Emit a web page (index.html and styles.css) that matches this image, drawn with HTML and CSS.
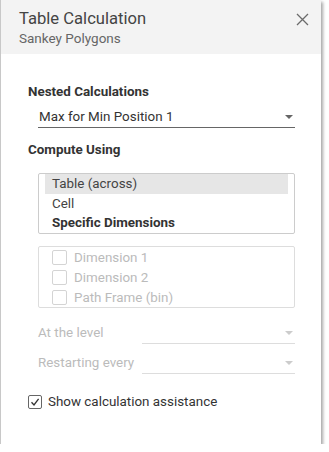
FILE: index.html
```html
<!DOCTYPE html>
<html>

<head>
    <title>Table Calculation</title>
    <link rel="stylesheet" href="styles.css">
</head>

<body>
    <div class="dialog">
        <div class="header">
            <div>
                <div class="title">Table Calculation</div>
                <div class="subtitle">Sankey Polygons</div>
            </div>
            <svg class="close" width="13" height="13" viewBox="0 0 13 13">
                <path d="M1 1 L12 12 M12 1 L1 12" stroke="#6b6b6b" stroke-width="1.3" fill="none" />
            </svg>
        </div>
        <div class="content">
            <div class="label">Nested Calculations</div>
            <div class="select">
                <span>Max for Min Position 1</span>
                <span class="arrow"></span>
            </div>

            <div class="label compute">Compute Using</div>
            <div class="listbox">
                <div class="option selected">Table (across)</div>
                <div class="option">Cell</div>
                <div class="option bold">Specific Dimensions</div>
            </div>

            <div class="dims">
                <div class="dim"><span class="box"></span>Dimension 1</div>
                <div class="dim"><span class="box"></span>Dimension 2</div>
                <div class="dim"><span class="box"></span>Path Frame (bin)</div>
            </div>

            <div class="level-row first">
                <span class="level-label">At the level</span>
                <div class="select disabled"><span></span><span class="arrow"></span></div>
            </div>
            <div class="level-row">
                <span class="level-label">Restarting every</span>
                <div class="select disabled"><span></span><span class="arrow"></span></div>
            </div>

            <div class="assist">
                <span class="check">
                    <svg width="10" height="10" viewBox="0 0 10 10">
                        <path d="M1.5 5.2 L4 8 L8.6 1.8" stroke="#333" stroke-width="1.3" fill="none" />
                    </svg>
                </span>
                Show calculation assistance
            </div>
        </div>
    </div>
</body>

</html>
```

FILE: styles.css
```css
body {
    margin: 0;
    background-color: white;
    font-family: 'Roboto', 'Noto Sans', sans-serif;
    color: #333;
}

.dialog {
    width: 320px;
    height: 444px;
    border-left: 1px solid #c8c8c8;
    background-color: white;
    box-shadow: 2px 2px 3px rgba(0, 0, 0, 0.35);
    display: flex;
    flex-direction: column;
}

.header {
    background-color: #f3f3f3;
    height: 54px;
    padding: 9px 12px 0 18px;
    box-sizing: border-box;
    display: flex;
    justify-content: space-between;
    align-items: flex-start;
}

.title {
    font-size: 16.6px;
    line-height: 20px;
    color: #444;
}

.subtitle {
    font-size: 13.5px;
    line-height: 18px;
    color: #666;
}

.close {
    margin-top: 4px;
}

.content {
    padding: 29px 26px 0 27px;
    font-size: 13.4px;
}

.label {
    font-weight: bold;
    line-height: 18px;
}

.compute {
    margin-top: 13px;
}

.select {
    margin: 5px 0 0 10px;
    height: 22px;
    border-bottom: 1px solid #666;
    display: flex;
    justify-content: space-between;
    align-items: center;
    padding-left: 1px;
    box-sizing: border-box;
}

.arrow {
    width: 0;
    height: 0;
    border-left: 4px solid transparent;
    border-right: 4px solid transparent;
    border-top: 4px solid #666;
    margin-right: 2px;
}

.listbox {
    margin: 14px 0 0 10px;
    height: 61px;
    border: 1px solid #ccc;
    border-radius: 2px;
    padding: 0 6px;
    box-sizing: border-box;
}

.option {
    height: 19.5px;
    line-height: 19.5px;
    padding-left: 7px;
    color: #444;
}

.option.selected {
    background-color: #e6e6e6;
}

.option.bold {
    font-weight: bold;
    color: #333;
}

.dims {
    margin: 12px 0 0 10px;
    height: 62px;
    border: 1px solid #ddd;
    border-radius: 2px;
    padding: 0 13px;
    box-sizing: border-box;
    color: #bbb;
}

.dim {
    height: 20px;
    display: flex;
    align-items: center;
}

.box {
    width: 13px;
    height: 13px;
    border: 1px solid #d4d4d4;
    border-radius: 2px;
    margin-right: 7px;
}

.level-row {
    margin-left: 10px;
    display: flex;
    align-items: flex-end;
    color: #bbb;
}

.level-row.first {
    margin-top: 6px;
}

.level-label {
    width: 104px;
    line-height: 22px;
}

.select.disabled {
    flex: 1;
    margin: 8px 0 0 0;
    border-bottom-color: #ddd;
}

.select.disabled .arrow {
    border-top-color: #ccc;
}

.assist {
    margin-top: 20px;
    display: flex;
    align-items: center;
    line-height: 16px;
}

.check {
    width: 14px;
    height: 14px;
    border: 1px solid #666;
    border-radius: 2px;
    box-sizing: border-box;
    margin-right: 6px;
    display: flex;
    align-items: center;
    justify-content: center;
}
```
